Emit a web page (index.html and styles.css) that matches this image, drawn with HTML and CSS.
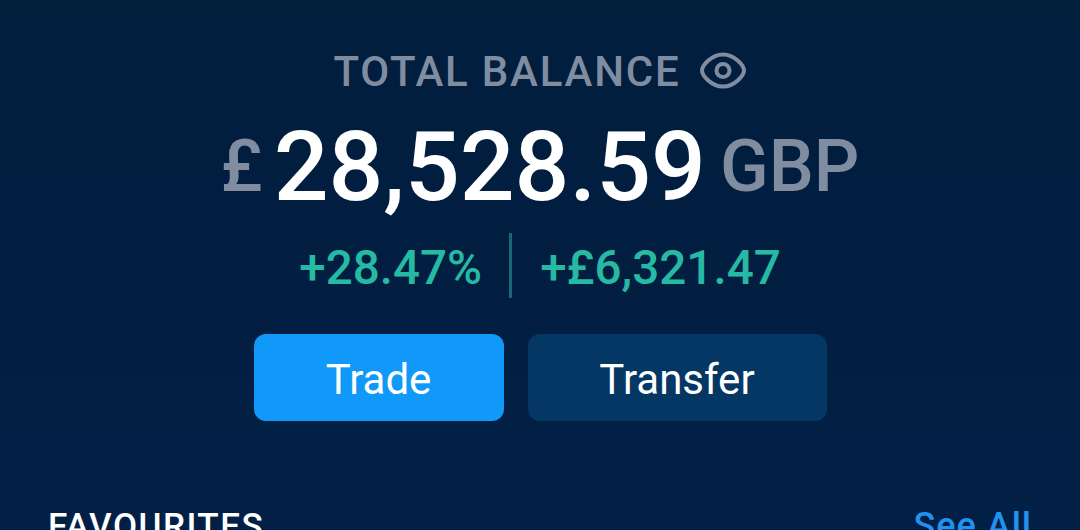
FILE: index.html
```html
<!DOCTYPE html>
<html lang="en">
<head>
  <meta charset="UTF-8">
  <title>Total Balance</title>
  <link rel="stylesheet" href="styles.css">
</head>
<body>

  <!-- Balance summary -->
  <section class="balance">
    <div class="balance-title">
      <span>TOTAL BALANCE</span>
      <svg class="eye" viewBox="0 0 48 38" fill="none" stroke="currentColor" stroke-width="4">
        <path d="M3 18.500C3 14 12 2.500 24 2.500S45 14 45 18.500 36 34.500 24 34.500 3 23 3 18.500z"/>
        <circle cx="24" cy="18.500" r="6.500"/>
      </svg>
    </div>

    <div class="amount">
      <span class="currency">£</span>
      <span class="value">28,528.59</span>
      <span class="currency code">GBP</span>
    </div>

    <div class="change">
      <span class="percent">+28.47%</span>
      <span class="divider"></span>
      <span class="profit">+£6,321.47</span>
    </div>

    <div class="actions">
      <button class="btn btn-trade">Trade</button>
      <button class="btn btn-transfer">Transfer</button>
    </div>
  </section>

  <!-- Favourites -->
  <div class="section-header">
    <h2>FAVOURITES</h2>
    <a href="#">See All</a>
  </div>

</body>
</html>
```
FILE: styles.css
```css
:root {
  --muted: #808da1;
  --green: #26b9a3;
  --blue: #1199fa;
}

* {
  box-sizing: border-box;
}

body {
  font-family: Roboto, sans-serif;
  font-weight: 500;
  background: linear-gradient(#011e3d, #021f46);
  color: white;
  height: 530px;
  margin: 0;
  overflow: hidden;
}

.balance {
  height: 506px;
  padding-top: 46px;
}

.balance-title {
  display: flex;
  justify-content: center;
  align-items: center;
  gap: 18px;
  height: 50px;
  color: var(--muted);
  font-size: 42px;
  letter-spacing: 1.8px;
}

.eye {
  width: 48px;
  height: 38px;
}

.amount {
  display: flex;
  justify-content: center;
  height: 124px;
  line-height: 142px;
}

.value {
  font-size: 96.5px;
  margin: 0 14px 0 11px;
}

.currency {
  color: var(--muted);
  font-size: 71.5px;
}

.change {
  display: flex;
  justify-content: center;
  align-items: center;
  height: 65px;
  margin-top: 13px;
  color: var(--green);
  font-size: 47.6px;
}

.percent,
.profit {
  padding-top: 4px;
}

.divider {
  width: 3px;
  height: 65px;
  margin: 0 28px 0 27px;
  background: #176a73;
}

.actions {
  display: flex;
  justify-content: center;
  gap: 24px;
  margin-top: 36px;
}

.btn {
  height: 87px;
  padding: 4px 0 0;
  border: none;
  border-radius: 12px;
  color: white;
  font-family: inherit;
  font-size: 42px;
  font-weight: 400;
  cursor: pointer;
}

.btn-trade {
  width: 250px;
  background: var(--blue);
}

.btn-transfer {
  width: 299px;
  background: #053765;
}

.section-header {
  display: flex;
  justify-content: space-between;
  padding: 0 48px;
  line-height: 41px;
}

.section-header h2 {
  margin: 0;
  font-size: 35px;
  font-weight: 500;
  letter-spacing: 1.5px;
}

.section-header a {
  color: #2292ee;
  font-size: 36px;
  letter-spacing: 1px;
  text-decoration: none;
}
```
